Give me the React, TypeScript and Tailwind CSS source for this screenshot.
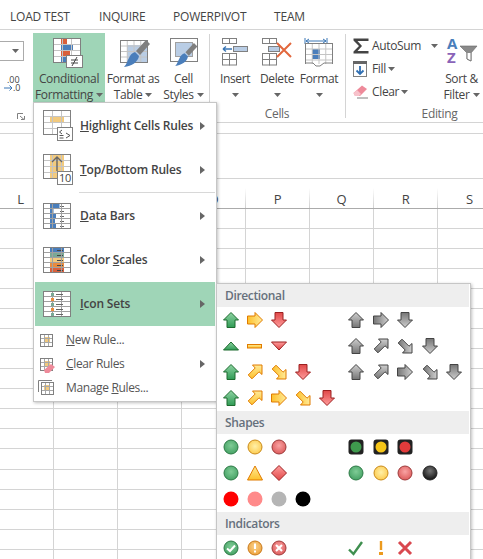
import React from "react";

const Caret = ({ className = "" }: { className?: string }) => (
  <svg width="7" height="4" viewBox="0 0 7 4" className={`inline-block ${className}`}>
    <polygon points="0,0 7,0 3.5,4" fill="#666" />
  </svg>
);

const Grid = ({ x, y, w, h, cols, rows, inner = "#c4c4c4" }: { x: number; y: number; w: number; h: number; cols: number; rows: number; inner?: string }) => {
  const lines = [];
  for (let i = 1; i < cols; i++) {
    const p = x + (w * i) / cols;
    lines.push(<line key={`c${i}`} x1={p} x2={p} y1={y} y2={y + h} stroke={inner} />);
  }
  for (let i = 1; i < rows; i++) {
    const p = y + (h * i) / rows;
    lines.push(<line key={`r${i}`} x1={x} x2={x + w} y1={p} y2={p} stroke={inner} />);
  }
  return (
    <g>
      {lines}
      <rect x={x} y={y} width={w} height={h} fill="none" stroke="#808080" />
    </g>
  );
};

const Brush = ({ dx = 0, dy = 0 }: { dx?: number; dy?: number }) => (
  <g transform={`translate(${dx} ${dy})`}>
    <polygon points="27,0 31,4 21,15 17,11" fill="#7f7f7f" />
    <path d="M16,12 L20,16 C19,22 13,26 5,27 C8,24 8,21 10,18 C11,15 13,13 16,12 Z" fill="#4a7ebb" />
  </g>
);

const CFIcon = () => (
  <svg width="32" height="32" viewBox="0 0 32 32">
    <rect x="0.5" y="0.5" width="27" height="24" fill="#fff" />
    <rect x="8" y="1" width="6" height="5" fill="#d9603b" />
    <rect x="8" y="6" width="12" height="6" fill="#4a7ebb" />
    <rect x="8" y="12" width="9" height="6" fill="#d9603b" />
    <rect x="8" y="18" width="5" height="6" fill="#4a7ebb" />
    <Grid x={0.5} y={0.5} w={27} h={24} cols={3} rows={4} />
    <rect x="13.5" y="17.5" width="16" height="12" fill="#fff" stroke="#808080" />
    <path d="M18,22 H25 M18,25 H25 M19,28 L24,19" stroke="#444" fill="none" />
  </svg>
);

const TableIcon = () => (
  <svg width="34" height="32" viewBox="0 0 34 32">
    <rect x="4.5" y="2.5" width="27" height="22" fill="#fff" />
    <rect x="11" y="7" width="20" height="17" fill="#b9cde5" />
    <Grid x={4.5} y={2.5} w={27} h={22} cols={4} rows={4} />
    <Brush dx={3} dy={2} />
  </svg>
);

const StyleIcon = () => (
  <svg width="34" height="32" viewBox="0 0 34 32">
    <rect x="3.5" y="0.5" width="27" height="23" fill="#fff" />
    <rect x="9" y="5" width="16" height="13" fill="#b9cde5" />
    <rect x="3.5" y="0.5" width="27" height="23" fill="none" stroke="#808080" />
    <rect x="8.5" y="4.5" width="17" height="14" fill="none" stroke="#a0a0a0" />
    <g transform="translate(4 5) scale(0.85)">
      <Brush />
    </g>
  </svg>
);

const InsertIcon = () => (
  <svg width="26" height="28" viewBox="0 0 26 28">
    <rect x="0.5" y="0.5" width="7" height="5" fill="#fff" stroke="#808080" />
    <rect x="7.5" y="0.5" width="7" height="5" fill="#fff" stroke="#808080" />
    <rect x="11.5" y="8.5" width="14" height="5" fill="#b9cde5" stroke="#808080" />
    <path d="M1,11 H10 M1,11 L4,8.5 M1,11 L4,13.5" stroke="#3a76b5" strokeWidth="1.4" fill="none" />
    <rect x="0.5" y="15.5" width="7" height="6" fill="#fff" stroke="#808080" />
    <rect x="7.5" y="15.5" width="7" height="6" fill="#fff" stroke="#808080" />
    <rect x="0.5" y="21.5" width="7" height="5.5" fill="#fff" stroke="#808080" />
    <rect x="7.5" y="21.5" width="7" height="5.5" fill="#fff" stroke="#808080" />
  </svg>
);

const DeleteIcon = () => (
  <svg width="30" height="28" viewBox="0 0 30 28">
    <rect x="0.5" y="0.5" width="7" height="5" fill="#fff" stroke="#808080" />
    <rect x="7.5" y="0.5" width="7" height="5" fill="#fff" stroke="#808080" />
    <rect x="6.5" y="8.5" width="11" height="5" fill="#b9cde5" stroke="#808080" />
    <rect x="0.5" y="15.5" width="7" height="6" fill="#fff" stroke="#808080" />
    <rect x="7.5" y="15.5" width="7" height="6" fill="#fff" stroke="#808080" />
    <rect x="0.5" y="21.5" width="7" height="5.5" fill="#fff" stroke="#808080" />
    <rect x="7.5" y="21.5" width="7" height="5.5" fill="#fff" stroke="#808080" />
    <path d="M15,5 L29,19 M29,5 L15,19" stroke="#e2673d" strokeWidth="2" fill="none" />
  </svg>
);

const FormatIcon = () => (
  <svg width="30" height="32" viewBox="0 0 30 32">
    <path d="M1,0 V6 M23,0 V6 M2,3 H22 M2,3 L5,1 M2,3 L5,5 M22,3 L19,1 M22,3 L19,5" stroke="#3a76b5" fill="none" />
    <rect x="8" y="11" width="8" height="10" fill="#4a7ebb" />
    <Grid x={1.5} y={5.5} w={27} h={22} cols={4} rows={4} />
    <rect x="0" y="26" width="30" height="3" fill="#fff" />
    <path d="M1.5,5.5 V25 M28.5,5.5 V25 M1.5,25 H9 L12,28 H16 L20,25 H28.5" stroke="#808080" fill="none" />
  </svg>
);

const SumIcon = () => (
  <svg width="16" height="16" viewBox="0 0 16 16">
    <polygon points="0.5,0.5 15.5,0.5 15.5,3 4.5,3 9,8 4.5,13 15.5,13 15.5,15.5 0.5,15.5 0.5,13.5 6,8 0.5,2.5" fill="#444" />
  </svg>
);

const FillIcon = () => (
  <svg width="14" height="16" viewBox="0 0 14 16">
    <rect x="0.5" y="0.5" width="13" height="15" fill="#fff" stroke="#808080" />
    <rect x="0" y="0" width="14" height="3" fill="#666" />
    <path d="M7,5 V13 M3.5,9.5 L7,13 L10.5,9.5" stroke="#2f6fb3" strokeWidth="1.8" fill="none" />
  </svg>
);

const Eraser = () => (
  <svg width="15" height="14" viewBox="0 0 15 14">
    <polygon points="9,0.5 14,4 7,11 2,11 0.5,8" fill="#ee8a9a" />
    <polygon points="0.5,8 4,5 8,9 6,11 2,11" fill="#f7c2cb" />
    <line x1="4" x2="15" y1="13" y2="13" stroke="#808080" />
  </svg>
);

const SortIcon = () => (
  <div className="flex ml-[3px] -mt-[2px] w-[32px]">
    <div className="flex flex-col w-[12px] text-[15px] font-bold leading-[14px] tracking-normal">
      <span className="text-[#4a7ebb]">A</span>
      <span className="text-[#8a63b8]">Z</span>
    </div>
    <svg width="19" height="18" viewBox="0 0 19 18" className="mt-[9px]">
      <path d="M1,1 H18 L12,8 V16 L8,14 V8 Z" fill="#8a8a8a" stroke="#666" strokeWidth="0.6" />
      <path d="M8,8 V14 L12,16 V8" fill="#fff" stroke="#777" />
    </svg>
  </div>
);

const MenuIcon = ({ kind }: { kind: string }) => {
  const w = 30;
  if (kind === "highlight")
    return (
      <svg width={w} height="32" viewBox="0 0 30 32">
        <rect x="7" y="6" width="14" height="7" fill="#f2ca7e" />
        <Grid x={0.5} y={0.5} w={27} h={24} cols={3} rows={4} />
        <rect x="14.5" y="17.5" width="15" height="13" fill="#fff" stroke="#808080" />
        <path d="M19,20 L16.5,22 L19,24 M16.5,25.5 H20.5 M16.5,28 H20.5 M23,23 L27,25.5 L23,28" stroke="#555" fill="none" />
      </svg>
    );
  if (kind === "top")
    return (
      <svg width={w} height="32" viewBox="0 0 30 32">
        <rect x="7" y="1" width="14" height="18" fill="#f2ca7e" />
        <rect x="7" y="19" width="7" height="6" fill="#f2ca7e" />
        <Grid x={0.5} y={0.5} w={27} h={24} cols={3} rows={4} />
        <path d="M14,17 V3 M9,8 L14,3 L19,8" stroke="#666" strokeWidth="1.4" fill="none" />
        <rect x="14.5" y="17.5" width="15" height="13" fill="#fff" stroke="#808080" />
        <text x="16" y="28" fontSize="11" fill="#444" fontFamily="'Open Sans',sans-serif">10</text>
      </svg>
    );
  if (kind === "bars")
    return (
      <svg width={w} height="26" viewBox="0 0 30 26">
        {[9.5, 3.5, 6, 5, 6].map((b, i) => (
          <g key={i}>
            <rect x="7" y={1 + i * 5} width={b} height="4" fill="#4a7ebb" />
            <line x1="17" x2="21" y1={3.5 + i * 5} y2={3.5 + i * 5} stroke="#666" />
          </g>
        ))}
        <Grid x={0.5} y={0.5} w={27} h={25} cols={3} rows={5} inner="#a0a0a0" />
      </svg>
    );
  if (kind === "scales")
    return (
      <svg width={w} height="26" viewBox="0 0 30 26">
        {["#4a7ebb", "#7aa995", "#f2ca7e", "#e98b3d", "#d9603b"].map((c, i) => (
          <g key={i}>
            <rect x="7" y={1 + i * 5} width="14" height="4" fill={c} />
            <line x1="14" x2="20" y1={3.5 + i * 5} y2={3.5 + i * 5} stroke="#444" />
          </g>
        ))}
        <Grid x={0.5} y={0.5} w={27} h={25} cols={3} rows={5} inner="#a0a0a0" />
      </svg>
    );
  return (
    <svg width={w} height="26" viewBox="0 0 30 26">
      <rect x="0.5" y="0.5" width="27" height="25" fill="#fff" />
      <Grid x={0.5} y={0.5} w={27} h={25} cols={3} rows={5} inner="#a0a0a0" />
      {["#7aa995", "#e98b3d", "#7aa995", "#e98b3d", "#7aa995"].map((c, i) => (
        <g key={i}>
          <rect x="8" y={2 + i * 5} width="3" height="3" fill={c} />
          <line x1="13" x2="20" y1={3.5 + i * 5} y2={3.5 + i * 5} stroke="#666" />
        </g>
      ))}
    </svg>
  );
};

const SmallIcon = ({ kind }: { kind: string }) => (
  <svg width="18" height="18" viewBox="0 0 18 18">
    {kind === "manage" && <path d="M0.5,13 V1.5 H14" fill="none" stroke="#808080" />}
    <rect x="6" y="6" width="6" height="6" fill="#f2ca7e" />
    <Grid x={kind === "manage" ? 3.5 : 2.5} y={3.5} w={12} h={12} cols={3} rows={3} inner="#a8a8a8" />
    {kind === "clear" && (
      <g>
        <polygon points="13,9 17,12 11,18 7,18 6,15" fill="#ee8a9a" />
      </g>
    )}
  </svg>
);

type Col = "g" | "y" | "r" | "k";
const strokes: Record<Col, string> = { g: "#1d6b2e", y: "#e07b00", r: "#9c2020", k: "#444444" };
const fills: Record<Col, string> = { g: "url(#gg)", y: "url(#gy)", r: "url(#gr)", k: "url(#gk)" };

const Arrow = ({ c, rot = 0, diag = false }: { c: Col; rot?: number; diag?: boolean }) => (
  <svg width="16" height="16" viewBox="0 0 16 16">
    <polygon
      points={diag ? "5.5,1 15,1 15,10.5 12,7.8 5,14.8 1.2,11 8.2,4" : "8,0.5 15.5,8 12,8 12,15.5 4,15.5 4,8 0.5,8"}
      transform={`rotate(${rot} 8 8)`}
      fill={fills[c]}
      stroke={strokes[c]}
    />
  </svg>
);

const Tri = ({ c, down = false }: { c: Col; down?: boolean }) => (
  <svg width="16" height="10" viewBox="0 0 16 10">
    <polygon points={down ? "0.5,1 15.5,1 8,9" : "8,1 15.5,9 0.5,9"} fill={fills[c]} stroke={strokes[c]} />
  </svg>
);

const Dash = () => (
  <svg width="16" height="5" viewBox="0 0 16 5">
    <rect x="0.5" y="0.5" width="14" height="3.5" fill={fills.y} stroke={strokes.y} />
  </svg>
);

const Dot = ({ fill, stroke }: { fill: string; stroke: string }) => (
  <svg width="16" height="16" viewBox="0 0 16 16">
    <circle cx="8" cy="8" r="7" fill={fill} stroke={stroke} />
  </svg>
);

const Flat = ({ fill }: { fill: string }) => (
  <svg width="16" height="16" viewBox="0 0 16 16">
    <circle cx="8" cy="8" r="7.5" fill={fill} />
  </svg>
);

const Light = ({ fill }: { fill: string }) => (
  <svg width="16" height="16" viewBox="0 0 16 16">
    <rect x="0.5" y="0.5" width="15" height="15" rx="3" fill="#222" />
    <circle cx="8" cy="8" r="5.5" fill={fill} />
  </svg>
);

const greenDot = "url(#dg)";
const yellowDot = "url(#dy)";
const redDot = "url(#dr)";

const Badge = ({ kind }: { kind: "ok" | "warn" | "bad" }) => {
  const fill = kind === "ok" ? greenDot : kind === "warn" ? "url(#do)" : redDot;
  const stroke = kind === "ok" ? "#2c7a45" : kind === "warn" ? "#c9791a" : "#a03a3a";
  return (
    <svg width="16" height="16" viewBox="0 0 16 16">
      <circle cx="8" cy="8" r="7" fill={fill} stroke={stroke} />
      {kind === "ok" && <path d="M4,8.5 L7,11 L12,5.5" stroke="#fff" strokeWidth="2" fill="none" />}
      {kind === "warn" && <path d="M8,3.5 V9 M8,10.5 V12.5" stroke="#fff" strokeWidth="2" fill="none" />}
      {kind === "bad" && <path d="M5,5 L11,11 M11,5 L5,11" stroke="#fff" strokeWidth="2" fill="none" />}
    </svg>
  );
};

const Cell = ({ children }: { children?: React.ReactNode }) => (
  <div className="w-[24px] h-[26px] flex items-center justify-center shrink-0">{children}</div>
);
const RCell = ({ children }: { children?: React.ReactNode }) => (
  <div className="w-[24.5px] h-[26px] flex items-center justify-center shrink-0">{children}</div>
);

const IconRow = ({ left, right }: { left: React.ReactNode[]; right: React.ReactNode[] }) => (
  <div className="flex h-[26px] pl-[2px]">
    <div className="flex w-[125px]">
      {left.map((n, i) => (
        <Cell key={i}>{n}</Cell>
      ))}
    </div>
    <div className="flex">
      {right.map((n, i) => (
        <RCell key={i}>{n}</RCell>
      ))}
    </div>
  </div>
);

const SectionHead = ({ children }: { children: React.ReactNode }) => (
  <div className="h-[23px] bg-[#eeeeee] mr-[1px] pl-[8px] flex items-center text-[12px] font-semibold text-[#66707c]">{children}</div>
);

const RibbonBtn = ({ icon, l1, l2, caret = true, width, active = false }: { icon: React.ReactNode; l1: string; l2?: string; caret?: boolean; width: string; active?: boolean }) => (
  <div className={`${width} h-[70px] flex flex-col items-center shrink-0 ${active ? "bg-[#9fd5b7]" : ""}`}>
    <div className="h-[38px] pt-[5px] flex items-start justify-center">{icon}</div>
    <div className="leading-[16px] whitespace-nowrap text-center">{l1}</div>
    <div className="leading-[16px] h-[16px] whitespace-nowrap text-center flex items-center justify-center gap-[3px]">
      {l2 && <span>{l2}</span>}
      {caret && <Caret />}
    </div>
  </div>
);

const Sep = ({ className = "" }: { className?: string }) => <div className={`w-px h-[84px] mt-[1px] bg-[#d4d4d4] shrink-0 ${className}`} />;

const SideArrow = () => (
  <svg width="5" height="8" viewBox="0 0 5 8" className="ml-auto mr-[10px]">
    <polygon points="0,0 5,4 0,8" fill="#666" />
  </svg>
);

const BigItem = ({ kind, label, active = false }: { kind: string; label: React.ReactNode; active?: boolean }) => (
  <div className={`h-[44px] flex items-center ${active ? "bg-[#9fd5b7]" : ""}`}>
    <div className="w-[45px] pl-[8px] shrink-0 flex items-center">
      <MenuIcon kind={kind} />
    </div>
    <span className="font-semibold text-[#444] tracking-[-0.18px]">{label}</span>
    <SideArrow />
  </div>
);

const SmallItem = ({ kind, label, arrow = false }: { kind: string; label: React.ReactNode; arrow?: boolean }) => (
  <div className="h-[24px] flex items-center">
    <div className="w-[31px] pl-[3px] shrink-0 flex items-center">
      <SmallIcon kind={kind} />
    </div>
    <span className="text-[#555]">{label}</span>
    {arrow && <SideArrow />}
  </div>
);

const letters = ["M", "N", "O", "P", "Q", "R", "S"];

export default function App() {
  return (
    <div className="relative w-[483px] h-[559px] overflow-hidden bg-white font-['Open_Sans',sans-serif] text-[12px] tracking-[-0.35px] text-[#444]">
      <svg width="0" height="0" className="absolute">
        <defs>
          <linearGradient id="gg" x1="0" y1="0" x2="0" y2="1"><stop offset="0" stopColor="#8fd3a3" /><stop offset="1" stopColor="#2f9b55" /></linearGradient>
          <linearGradient id="gy" x1="0" y1="0" x2="0" y2="1"><stop offset="0" stopColor="#ffeb9a" /><stop offset="1" stopColor="#fdc02a" /></linearGradient>
          <linearGradient id="gr" x1="0" y1="0" x2="0" y2="1"><stop offset="0" stopColor="#ff9c9c" /><stop offset="1" stopColor="#e04848" /></linearGradient>
          <linearGradient id="gk" x1="0" y1="0" x2="0" y2="1"><stop offset="0" stopColor="#cfcfcf" /><stop offset="1" stopColor="#757575" /></linearGradient>
          <radialGradient id="dg" cx="0.5" cy="0.4" r="0.6"><stop offset="0" stopColor="#7fcc96" /><stop offset="1" stopColor="#46a265" /></radialGradient>
          <radialGradient id="dy" cx="0.5" cy="0.45" r="0.6"><stop offset="0" stopColor="#fff0a8" /><stop offset="1" stopColor="#fdc94a" /></radialGradient>
          <radialGradient id="dr" cx="0.5" cy="0.4" r="0.6"><stop offset="0" stopColor="#f9a3a3" /><stop offset="1" stopColor="#dd5c5c" /></radialGradient>
          <radialGradient id="do" cx="0.5" cy="0.4" r="0.6"><stop offset="0" stopColor="#fbd28c" /><stop offset="1" stopColor="#eda33e" /></radialGradient>
          <radialGradient id="dk" cx="0.5" cy="0.35" r="0.6"><stop offset="0" stopColor="#777" /><stop offset="1" stopColor="#1a1a1a" /></radialGradient>
        </defs>
      </svg>

      {/* Tabs */}
      <div className="h-[30px] border-b border-[#d4d4d4] flex items-center pt-[5px] pl-[10px] whitespace-nowrap text-[12px] tracking-[-0.2px] text-[#444]">
        <span className="w-[89px]">LOAD TEST</span>
        <span className="w-[74px]">INQUIRE</span>
        <span className="w-[101px]">POWERPIVOT</span>
        <span>TEAM</span>
      </div>

      {/* Ribbon */}
      <div className="h-[93px] border-b border-[#d4d4d4] flex pt-[3px]">
        <div className="w-[33px] shrink-0 flex flex-col">
          <div className="-ml-px w-[25px] h-[20px] mt-[8px] border border-[#ababab] flex items-center justify-end pr-[4px]">
            <Caret />
          </div>
          <div className="h-[18px] mt-[15px] pl-[4px] flex flex-col text-[9px] leading-[8px] tracking-normal">
            <span className="pl-[3px]">.00</span>
            <div className="flex items-center">
              <svg width="9" height="8" viewBox="0 0 9 8"><path d="M0,4 H8 M5.5,1.5 L8,4 L5.5,6.5" stroke="#3a76b5" fill="none" /></svg>
              <span>.0</span>
            </div>
          </div>
          <svg width="8" height="7" viewBox="0 0 8 7" className="ml-[17px] mt-[19px]">
            <path d="M0.5,6 V0.5 H6 M3,3 L7,6.5 M4,6.5 H7.5 V3" stroke="#808080" fill="none" />
          </svg>
        </div>
        <RibbonBtn width="w-[72px]" active icon={<CFIcon />} l1="Conditional" l2="Formatting" />
        <RibbonBtn width="w-[56px]" icon={<TableIcon />} l1="Format as" l2="Table" />
        <RibbonBtn width="w-[45px]" icon={<StyleIcon />} l1="Cell" l2="Styles" />
        <Sep className="ml-[3px]" />
        <div className="ml-[3px] w-[128px] shrink-0 flex flex-col">
          <div className="flex">
            <RibbonBtn width="w-[44px]" icon={<InsertIcon />} l1="Insert" />
            <RibbonBtn width="w-[40px]" icon={<DeleteIcon />} l1="Delete" />
            <RibbonBtn width="w-[44px]" icon={<FormatIcon />} l1="Format" />
          </div>
          <div className="mt-[3px] leading-[16px] text-center text-[#666]">Cells</div>
        </div>
        <Sep className="ml-[4px]" />
        <div className="flex-1 flex flex-col">
          <div className="flex">
            <div className="w-[94px] shrink-0 pl-[7px] pt-[1px] flex flex-col">
              <div className="h-[23px] flex items-center">
                <div className="w-[19px]"><SumIcon /></div>
                <span>AutoSum</span>
                <Caret className="ml-[10px]" />
              </div>
              <div className="h-[23px] flex items-center">
                <div className="w-[19px]"><FillIcon /></div>
                <span>Fill</span>
                <Caret className="ml-[2px]" />
              </div>
              <div className="h-[23px] flex items-center">
                <div className="w-[19px]"><Eraser /></div>
                <span>Clear</span>
                <Caret className="ml-[2px]" />
              </div>
            </div>
            <RibbonBtn width="w-[43px]" icon={<SortIcon />} l1="Sort &" l2="Filter" />
          </div>
          <div className="mt-[3px] leading-[16px] pl-[50px] text-center text-[#666]">Editing</div>
        </div>
      </div>

      {/* Sheet */}
      <div className="h-[11px] border-b border-[#d4d4d4]" />
      <div className="h-[45px] border-b border-[#d4d4d4]" />
      <div className="h-[30px] border-b border-[#ababab] flex">
        <div className="w-[54px] flex items-end shrink-0">
          <span className="flex-1 h-[18px] leading-[18px] text-center pr-[12px] text-[13px]">L</span>
          <div className="w-px h-[20px] bg-linear-to-b from-white to-[#d0d0d0]" />
        </div>
        {letters.map((l) => (
          <div key={l} className="w-[64px] flex items-end shrink-0">
            <span className="flex-1 h-[18px] leading-[18px] text-center text-[13px]">{l}</span>
            <div className="w-px h-[20px] bg-linear-to-b from-white to-[#d0d0d0]" />
          </div>
        ))}
      </div>
      {Array.from({ length: 18 }).map((_, r) => (
        <div key={r} className={`flex border-b border-[#d4d4d4] ${r === 12 ? "h-[21px]" : "h-[20px]"}`}>
          <div className="w-[54px] shrink-0 border-r border-[#d4d4d4]" />
          {letters.map((l) => (
            <div key={l} className="w-[64px] shrink-0 border-r border-[#d4d4d4]" />
          ))}
        </div>
      ))}

      {/* Conditional formatting menu */}
      <div className="absolute left-[33px] top-[102px] w-[184px] h-[300px] bg-white border border-[#c6c6c6] shadow-[1px_1px_3px_rgba(0,0,0,0.25)] pt-[1px] px-[1px] flex flex-col">
        <BigItem kind="highlight" label={<><u>H</u>ighlight Cells Rules</>} />
        <BigItem kind="top" label={<><u>T</u>op/Bottom Rules</>} />
        <div className="h-[2px] ml-[44px]"><div className="h-px bg-[#d8d8d8]" /></div>
        <BigItem kind="bars" label={<><u>D</u>ata Bars</>} />
        <BigItem kind="scales" label={<>Color <u>S</u>cales</>} />
        <BigItem kind="sets" active label={<><u>I</u>con Sets</>} />
        <div className="h-[2px]" />
        <SmallItem kind="new" label={<><u>N</u>ew Rule...</>} />
        <SmallItem kind="clear" arrow label={<><u>C</u>lear Rules</>} />
        <SmallItem kind="manage" label={<>Manage <u>R</u>ules...</>} />
      </div>

      {/* Icon sets submenu */}
      <div className="absolute left-[216px] top-[283px] w-[255px] h-[290px] bg-white border border-[#c6c6c6] shadow-[1px_1px_3px_rgba(0,0,0,0.25)] flex flex-col">
        <SectionHead>Directional</SectionHead>
        <IconRow
          left={[<Arrow c="g" />, <Arrow c="y" rot={90} />, <Arrow c="r" rot={180} />]}
          right={[<Arrow c="k" />, <Arrow c="k" rot={90} />, <Arrow c="k" rot={180} />]}
        />
        <IconRow
          left={[<Tri c="g" />, <Dash />, <Tri c="r" down />]}
          right={[<Arrow c="k" />, <Arrow c="k" diag />, <Arrow c="k" diag rot={90} />, <Arrow c="k" rot={180} />]}
        />
        <IconRow
          left={[<Arrow c="g" />, <Arrow c="y" diag />, <Arrow c="y" diag rot={90} />, <Arrow c="r" rot={180} />]}
          right={[<Arrow c="k" />, <Arrow c="k" diag />, <Arrow c="k" rot={90} />, <Arrow c="k" diag rot={90} />, <Arrow c="k" rot={180} />]}
        />
        <IconRow
          left={[<Arrow c="g" />, <Arrow c="y" diag />, <Arrow c="y" rot={90} />, <Arrow c="y" diag rot={90} />, <Arrow c="r" rot={180} />]}
          right={[]}
        />
        <SectionHead>Shapes</SectionHead>
        <IconRow
          left={[<Dot fill={greenDot} stroke="#2c7a45" />, <Dot fill={yellowDot} stroke="#c98a1a" />, <Dot fill={redDot} stroke="#9c3a3a" />]}
          right={[<Light fill="#3f9a4e" />, <Light fill="#f5c518" />, <Light fill="#e23b3b" />]}
        />
        <IconRow
          left={[
            <Dot fill={greenDot} stroke="#2c7a45" />,
            <svg width="16" height="16" viewBox="0 0 16 16"><polygon points="8,1 15.5,15 0.5,15" fill="url(#gy)" stroke="#e07b00" /></svg>,
            <svg width="16" height="16" viewBox="0 0 16 16"><polygon points="8,0.5 15.5,8 8,15.5 0.5,8" fill="url(#gr)" stroke="#9c2020" /></svg>,
          ]}
          right={[
            <Dot fill={greenDot} stroke="#2c7a45" />,
            <Dot fill={yellowDot} stroke="#c98a1a" />,
            <Dot fill={redDot} stroke="#9c3a3a" />,
            <Dot fill="url(#dk)" stroke="#222" />,
          ]}
        />
        <IconRow left={[<Flat fill="#ff0000" />, <Flat fill="#ff8a8a" />, <Flat fill="#b5b5b5" />, <Flat fill="#000000" />]} right={[]} />
        <SectionHead>Indicators</SectionHead>
        <IconRow
          left={[<Badge kind="ok" />, <Badge kind="warn" />, <Badge kind="bad" />]}
          right={[
            <svg width="16" height="16" viewBox="0 0 16 16"><path d="M1,9.5 L5.5,14 L14,2" stroke="#3f8f4f" strokeWidth="2.4" fill="none" /></svg>,
            <svg width="16" height="16" viewBox="0 0 16 16"><path d="M8,1 V10" stroke="#ec9a1e" strokeWidth="2.4" fill="none" /><rect x="6" y="12" width="4" height="3" fill="#ec9a1e" /></svg>,
            <svg width="16" height="16" viewBox="0 0 16 16"><path d="M2,2 L14,14 M14,2 L2,14" stroke="#d9484f" strokeWidth="3" fill="none" /></svg>,
          ]}
        />
      </div>
    </div>
  );
}
